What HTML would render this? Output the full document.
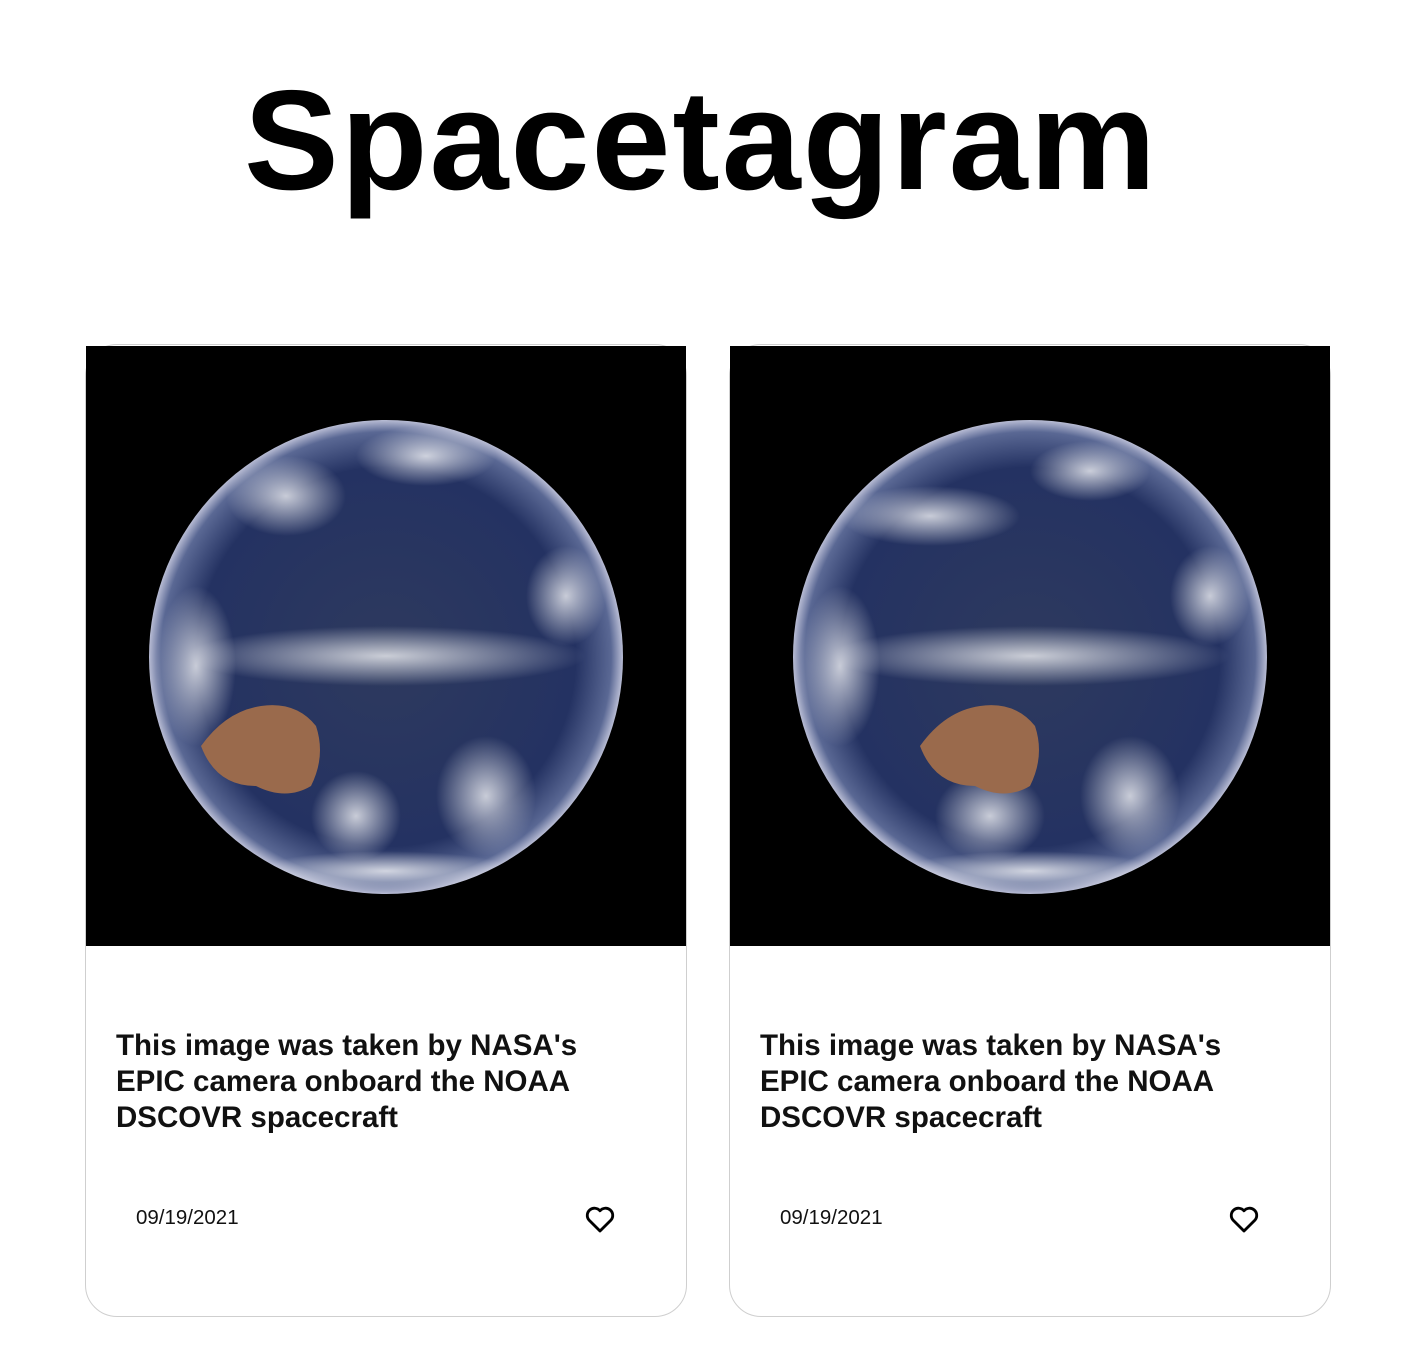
<!DOCTYPE html>
<html><head><meta charset="utf-8"><style>
body{margin:0;width:1402px;height:1352px;background:#fff;font-family:"Liberation Sans",sans-serif;position:relative;overflow:hidden}
h1{position:absolute;left:0;width:1402px;top:56px;margin:0;text-align:center;font-size:142px;font-weight:bold;letter-spacing:2px;line-height:170px;color:#000}
.card{position:absolute;top:344px;width:600px;height:971px;border:1.5px solid #cfcfcf;border-radius:32px;box-sizing:content-box;background:#fff}
.img{position:absolute;left:0;top:1px;width:600px;height:600px;background:#000}
.cap{position:absolute;left:30px;top:683px;font-size:29.5px;font-weight:bold;line-height:36px;color:#111;width:510px}
.date{position:absolute;left:50px;top:861px;font-size:20.5px;color:#111}
.heart{position:absolute;left:496px;top:857px}
</style></head><body>
<h1>Spacetagram</h1>
<svg width="0" height="0" style="position:absolute"><defs>
<radialGradient id="sea" cx="50%" cy="50%" r="50%"><stop offset="0" stop-color="#2e3a5e"/><stop offset="0.8" stop-color="#243262"/><stop offset="0.95" stop-color="#5a6894"/><stop offset="1" stop-color="#b8bcd4"/></radialGradient>
<radialGradient id="cl" cx="50%" cy="50%" r="50%"><stop offset="0" stop-color="#fff" stop-opacity=".75"/><stop offset="1" stop-color="#fff" stop-opacity="0"/></radialGradient>
<clipPath id="cc"><circle cx="300" cy="311" r="237"/></clipPath>
</defs></svg>
<div class="card" style="left:85px">
<div class="img"><svg width="600" height="600" viewBox="0 0 600 600">
<circle cx="300" cy="311" r="237" fill="url(#sea)"/>
<g fill="url(#cl)" clip-path="url(#cc)">
<ellipse cx="300" cy="310" rx="200" ry="30"/><ellipse cx="340" cy="110" rx="70" ry="30"/><ellipse cx="200" cy="150" rx="60" ry="40"/>
<ellipse cx="400" cy="450" rx="50" ry="60"/><ellipse cx="270" cy="470" rx="45" ry="45"/><ellipse cx="110" cy="320" rx="40" ry="80"/>
<ellipse cx="480" cy="250" rx="40" ry="50"/><ellipse cx="300" cy="525" rx="130" ry="20"/></g>
<path d="M115 400 Q140 365 175 360 Q210 355 230 380 Q240 410 225 440 Q200 455 170 440 Q130 440 115 400Z" fill="#9a6a4c"/>
</svg></div>
<div class="cap">This image was taken by NASA's EPIC camera onboard the NOAA DSCOVR spacecraft</div>
<div class="date">09/19/2021</div>
<svg class="heart" width="36" height="34" viewBox="0 0 24 24"><path d="M12 20.5 L4.2 12.7 A4.6 4.6 0 0 1 12 6.2 A4.6 4.6 0 0 1 19.8 12.7 Z" fill="none" stroke="#000" stroke-width="2" stroke-linejoin="round"/></svg>
</div>
<div class="card" style="left:729px">
<div class="img"><svg width="600" height="600" viewBox="0 0 600 600">
<circle cx="300" cy="311" r="237" fill="url(#sea)"/>
<g fill="url(#cl)" clip-path="url(#cc)">
<ellipse cx="300" cy="310" rx="200" ry="30"/><ellipse cx="200" cy="170" rx="90" ry="30"/><ellipse cx="360" cy="125" rx="60" ry="30"/>
<ellipse cx="400" cy="450" rx="50" ry="60"/><ellipse cx="260" cy="470" rx="55" ry="45"/><ellipse cx="110" cy="320" rx="40" ry="80"/>
<ellipse cx="480" cy="250" rx="40" ry="50"/><ellipse cx="300" cy="525" rx="130" ry="20"/></g>
<path d="M190 400 Q215 365 250 360 Q285 355 305 380 Q315 410 300 440 Q275 455 245 440 Q205 440 190 400Z" fill="#9a6a4c"/>
</svg></div>
<div class="cap">This image was taken by NASA's EPIC camera onboard the NOAA DSCOVR spacecraft</div>
<div class="date">09/19/2021</div>
<svg class="heart" width="36" height="34" viewBox="0 0 24 24"><path d="M12 20.5 L4.2 12.7 A4.6 4.6 0 0 1 12 6.2 A4.6 4.6 0 0 1 19.8 12.7 Z" fill="none" stroke="#000" stroke-width="2" stroke-linejoin="round"/></svg>
</div>
</body></html>
